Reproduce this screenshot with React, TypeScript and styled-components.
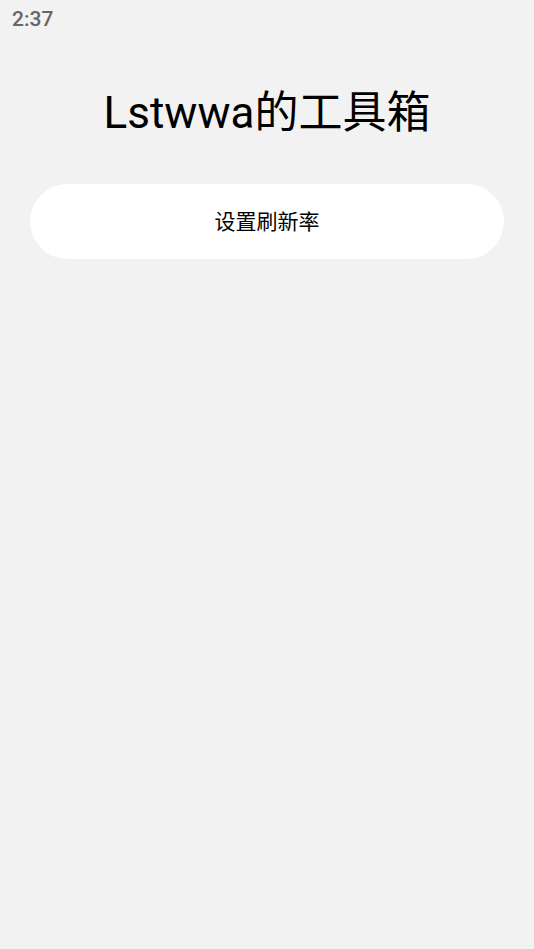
import React from 'react';
import styled, { createGlobalStyle } from 'styled-components';

const GlobalStyle = createGlobalStyle`
  body {
    margin: 0;
    background: #f2f2f2;
    color: #000;
    font-family: Roboto, "Noto Sans CJK SC", sans-serif;
  }
`;

const Page = styled.div`
  display: flex;
  flex-direction: column;
  min-height: 100vh;
`;

const StatusBar = styled.header`
  padding: 6px 12px;
  font-size: 21px;
  font-weight: 500;
  line-height: 26px;
  color: #666;
`;

const Content = styled.main`
  display: flex;
  flex-direction: column;
  gap: 38px;
  padding: 42px 30px;
`;

const Title = styled.h1`
  margin: 0;
  font-size: 44px;
  font-weight: 400;
  line-height: 66px;
  text-align: center;
`;

const ActionButton = styled.button`
  width: 100%;
  min-height: 75px;
  padding: 0 24px;
  border: 0;
  border-radius: 38px;
  background: #fff;
  color: #000;
  font: inherit;
  font-size: 21px;
  line-height: 30px;
  cursor: pointer;
`;

export default function App() {
  return (
    <Page lang="zh-CN">
      <GlobalStyle />
      <StatusBar>
        <time>2:37</time>
      </StatusBar>
      <Content>
        <Title>Lstwwa的工具箱</Title>
        <ActionButton type="button">设置刷新率</ActionButton>
      </Content>
    </Page>
  );
}
